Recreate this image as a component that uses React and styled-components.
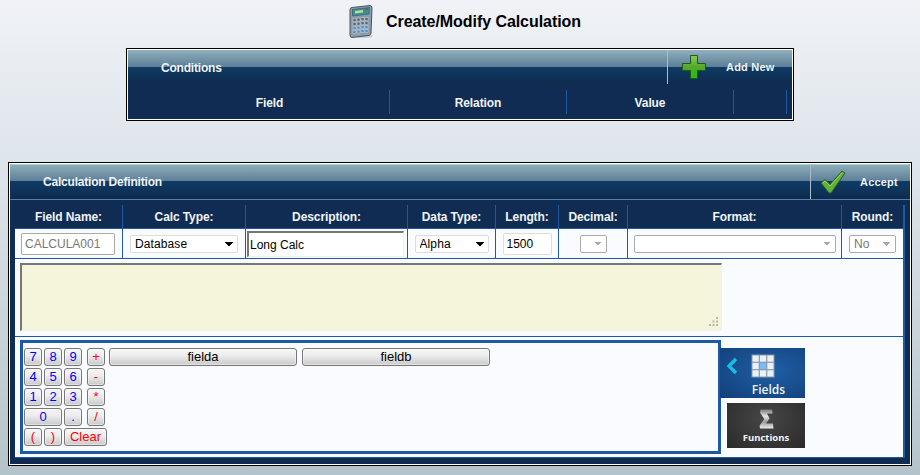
import React from "react";
import styled, { createGlobalStyle } from "styled-components";

const Global = createGlobalStyle`
  html, body { margin: 0; padding: 0; }
  body { font-family: "Liberation Sans", Arial, sans-serif; background: #c0ccd3; }
  * { box-sizing: border-box; }
`;

const Page = styled.div`
  width: 920px; height: 475px; overflow: hidden;
  background: linear-gradient(180deg, #f0f2f6 0%, #e2e8ee 25%, #d8e0e6 45%, #b4c3ca 100%);
  display: flex; flex-direction: column; align-items: center;
`;
const TitleRow = styled.div`
  height: 48px; width: 100%; display: flex; align-items: flex-start;
  padding: 5px 0 0 348px; gap: 12px;
`;
const Title = styled.h1`
  margin: 8px 0 0; font-size: 16px; line-height: 18px; font-weight: bold; color: #000; letter-spacing: -0.06px;
`;
const Panel = styled.section`
  width: ${p => p.$w}px; margin-top: ${p => p.$mt || 0}px;
  border: 1px solid #000; box-shadow: inset 0 0 0 1px #fff; padding: 1px;
  display: flex; flex-direction: column;
`;
const Header = styled.header`
  height: ${p => p.$h}px; display: flex; align-items: center; justify-content: space-between;
  background: linear-gradient(180deg, #8fb0bc 0%, #5d7f98 49%, #0f3b66 50%, #0f3257 80%, #0e2a4b 100%);
  box-shadow: inset 0 1px 0 ${p => p.$hl};
  color: #fff;
`;
const HeaderTitle = styled.span`
  font-size: 12px; font-weight: bold; padding: 1px 0 0 ${p => p.$pl}px; color: #f0f3f6; letter-spacing: -0.2px;
`;
const Action = styled.div`
  height: 100%; width: ${p => p.$w}px; border-left: 1px solid #a9bcc8;
  display: flex; align-items: center; padding-left: ${p => p.$pl}px; gap: ${p => p.$gap}px;
  font-size: 11px; font-weight: bold; color: #eef2f5; flex: none; letter-spacing: 0.2px;
`;
const CondRow = styled.div`
  height: 35px; background: #102c52; padding: 6px 0 5px 22px;
  display: grid; grid-template-columns: 240px 177px 167px 53px 1fr;
`;
const HeadCell = styled.div`
  color: #f0f3f6; font-size: 12px; font-weight: bold; text-align: center; letter-spacing: -0.1px;
  display: flex; align-items: center; justify-content: center; padding-top: 1px;
  border-right: ${p => p.$edge ? "2px solid #1d5aa6" : p.$last ? "none" : "1px solid #1d5aa6"};
`;
const Frame = styled.div`
  background: #102c52; padding: 0 5px 6px 5px; border-top: 1px solid #4a83ad;
`;
const Inner = styled.div`
  display: flex; flex-direction: column;
  border-bottom: 1px solid #1d5aa6;
`;
const cols = "108px 123px 162px 88px 63px 69px 214px 1fr";
const DefHead = styled.div`
  display: grid; grid-template-columns: ${cols}; height: 29px; padding-top: 5px;
  background: #102c52; border-bottom: 1px solid #1d5aa6;
`;
const Content = styled.div`background: #fafbfe; border-right: 2px solid #1d5aa6;`;
const DefRow = styled.div`
  display: grid; grid-template-columns: ${cols}; height: 30px;
  border-bottom: 1px solid #1d5aa6;
`;
const Cell = styled.div`
  display: flex; align-items: center; justify-content: ${p => p.$j || "center"};
  padding-left: ${p => p.$pl || 0}px; padding-top: 1px;
  border-right: ${p => p.$last ? "none" : "1px solid #1d5aa6"};
`;
const TextBox = styled.input`
  width: ${p => p.$w}px; height: 22px; font: 12px "Liberation Sans", Arial, sans-serif;
  color: ${p => p.disabled ? "#777" : "#000"}; background: #fff;
  border: 1px solid ${p => p.disabled ? "#aaa" : "#ddd"}; border-radius: 2px; padding: 0 3px; outline: none;
`;
const DescBox = styled.input`
  width: 157px; height: 26px; margin-left: -2px; font: 12px "Liberation Sans", Arial, sans-serif; color: #000;
  background: #fff; border-style: solid; border-width: 2px 1px 1px 2px;
  border-color: #777 #eee #eee #777; padding: 0 1px; outline: none;
`;
const Select = styled.select`
  appearance: none;
  width: ${p => p.$w}px; height: 18px; font: 12px "Liberation Sans", Arial, sans-serif; letter-spacing: 0.1px;
  color: ${p => p.disabled ? "#777" : "#000"};
  border: 1px solid ${p => p.disabled ? "#aaa" : "#ddd"}; border-radius: 2px; padding: 0 0 0 4px; opacity: 1;
  background-color: #fff;
  background-image:
    linear-gradient(45deg, transparent 50%, ${p => p.disabled ? "#a8a8a8" : "#000"} 50%),
    linear-gradient(-45deg, transparent 50%, ${p => p.disabled ? "#a8a8a8" : "#000"} 50%);
  background-size: 4px 4px;
  background-repeat: no-repeat;
  background-position: right 8px center, right 4px center;
`;
const AreaRow = styled.div`
  height: 78px; padding: 4px 0 0 5px; border-bottom: 1px solid #1d5aa6; position: relative;
`;
const Area = styled.textarea`
  display: block; width: 702px; height: 68px; margin: 0; background: #f5f5dc; outline: none; resize: none;
  border-style: solid; border-width: 2px 1px 1px 2px; border-color: #777 #f0f0f0 #f0f0f0 #777;
`;
const Grip = styled.svg`
  position: absolute; left: 693px; top: 57px;
`;
const Work = styled.div`
  display: flex; padding: 3px 0 3px 5px; height: 120px;
`;
const CalcBox = styled.div`
  width: 701px; height: 114px; border: 3px solid #1d5aa6; padding: 5px 0 0 1px;
  display: flex; gap: 1px;
`;
const Keypad = styled.div`display: flex; flex-direction: column; gap: 2px; width: 84px; flex: none;`;
const KeyRow = styled.div`display: flex; gap: 2px;`;
const Key = styled.button`
  width: ${p => p.$w || 18}px; height: 18px; margin-left: ${p => p.$ml || 0}px; padding: 0; flex: none;
  font: 13px "Liberation Sans", Arial, sans-serif; color: ${p => p.$red ? "#f00" : "#00f"};
  background: linear-gradient(180deg, #f6f6f6 0%, #ededed 40%, #c9c9c9 100%);
  border: 1px solid #777; border-radius: 3px; line-height: 16px;
  box-shadow: inset 0 0 0 1px rgba(255,255,255,.45);
`;
const FieldKey = styled(Key)`
  width: 188px; color: #000; height: 18px; margin-right: 3px;
`;
const Side = styled.div`
  display: flex; flex-direction: column; align-items: flex-end; width: 85px; margin-left: -1px;
  padding-top: 8px; gap: 5px; flex: none;
`;
const Tile = styled.div`
  width: ${p => p.$w}px; height: ${p => p.$h}px; display: flex; flex-direction: column; align-items: center;
  color: #f2f5f8; font-weight: ${p => p.$fw}; font-size: ${p => p.$fs}px; font-family: "Open Sans", "Liberation Sans", sans-serif;
  background: ${p => p.$bg};
`;
const FieldsInner = styled.div`
  display: flex; align-items: center; width: 100%; padding: 6px 0 0 6px; gap: 13px;
`;
const SigmaSlot = styled.div`height: 26px; padding-top: 6px; line-height: 0;`;
const TileLabel = styled.span`margin: ${p => p.$m}; line-height: 12px;`;

const Calculator = () => (
  <svg width="26" height="34" viewBox="0 0 26 34">
    <ellipse cx="15" cy="31" rx="10" ry="2" fill="#c8ced4" />
    <path d="M4 2.5 L22 .5 Q24 .5 24 3 L23 28 Q23 30 21 30.4 L4 32.5 Q2 32.5 2 30 L2 4.5 Q2 2.7 4 2.5Z" fill="#8d9cab" stroke="#4a5560" />
    <path d="M4.5 4.5 L21.5 2.5 L21 9 L4.5 11Z" fill="#3f8f92" stroke="#2f5d70" strokeWidth=".7" />
    <path d="M7 6 L15 5 L15 7.6 L7 8.6Z" fill="#bcdc9c" />
    <rect x="17" y="3.4" width="3" height="1.2" fill="#b33" />
    {[0,1,2,3].map(r => [0,1,2,3].map(c => (
      <rect key={r+"-"+c} x={5 + c*4} y={13.4 + r*4 - c*0.3} width="3" height="3" fill={r > 1 ? "#4d8fc9" : "#5a6672"} stroke="#dfe5ea" strokeWidth=".4" />
    )))}
  </svg>
);
const Plus = () => (
  <svg width="24" height="24" viewBox="0 0 24 24">
    <defs>
      <linearGradient id="pg" x1="0" y1="0" x2="0" y2="1">
        <stop offset="0" stopColor="#8ec85a" /><stop offset=".5" stopColor="#55a82a" /><stop offset="1" stopColor="#1fc20e" />
      </linearGradient>
    </defs>
    <path d="M8.5 .5 H15.5 V8.5 H23.5 V15.5 H15.5 V23.5 H8.5 V15.5 H.5 V8.5 H8.5Z" fill="url(#pg)" stroke="#1f5a14" />
  </svg>
);
const Check = () => (
  <svg width="26" height="24" viewBox="0 0 26 24">
    <path d="M1 13 L5 9.5 L10 14.5 L22 1 L25 3 L11 23 L9 23Z" fill="#5fb337" stroke="#2f5c2a" strokeWidth="1" strokeLinejoin="round" />
    <path d="M3 13 L5 11 L10 16 L22 3" fill="none" stroke="#8fd45c" strokeWidth="1" />
  </svg>
);
const GridIcon = () => (
  <svg width="24" height="24" viewBox="0 0 24 24">
    <rect x="0.5" y="0.5" width="23" height="23" fill="#8d99a5" />
    {[0,1,2].map(r => [0,1,2].map(c => (
      <rect key={r+"-"+c} x={1.5 + c*7.4} y={1.5 + r*7.4} width="6.2" height="6.2" fill={r===1 && c===1 ? "#79bdf5" : "#e8f0f8"} />
    )))}
  </svg>
);
const Chevron = () => (
  <svg width="12" height="18" viewBox="0 0 12 18">
    <path d="M10 2 L3 9 L10 16" fill="none" stroke="#17bde8" strokeWidth="3.4" />
  </svg>
);
const Sigma = () => (
  <svg width="15" height="20" viewBox="0 0 15 20">
    <defs>
      <linearGradient id="sg" x1="0" y1="0" x2="0" y2="1">
        <stop offset="0" stopColor="#7a7a7a" /><stop offset=".35" stopColor="#e4e4e4" /><stop offset=".65" stopColor="#9a9a9a" /><stop offset="1" stopColor="#ececec" />
      </linearGradient>
    </defs>
    <path d="M1.5 .5 H13 L13.6 4.5 H8 L10.6 9.5 L7 14.6 H14 L14.5 19.5 H1 L.6 16.6 L5.2 10 L1 3.5Z" fill="url(#sg)" />
  </svg>
);
const dots = [[14,0],[7,7],[14,7],[0,14],[7,14],[14,14]];
const GripDots = () => (
  <Grip width="16" height="12" viewBox="0 0 32 24">
    {dots.map(([x, y]) => <rect key={x+"-"+y} x={x + 2} y={y + 2} width="4" height="4" fill="#b9b9a8" />)}
  </Grip>
);

const nums = [["7","8","9","+"],["4","5","6","-"],["1","2","3","*"]];

export default function App() {
  return (
    <Page>
      <Global />
      <TitleRow>
        <Calculator />
        <Title>Create/Modify Calculation</Title>
      </TitleRow>
      <Panel $w={668}>
        <Header $h={34} $hl="#8fb0bc">
          <HeaderTitle $pl={33}>Conditions</HeaderTitle>
          <Action $w={125} $pl={14} $gap={20}><Plus />Add New</Action>
        </Header>
        <CondRow>
          <HeadCell>Field</HeadCell>
          <HeadCell>Relation</HeadCell>
          <HeadCell>Value</HeadCell>
          <HeadCell />
          <HeadCell $last />
        </CondRow>
      </Panel>
      <Panel $w={904} $mt={41}>
        <Header $h={35} $hl="#a8d0d0">
          <HeaderTitle $pl={33}>Calculation Definition</HeaderTitle>
          <Action $w={100} $pl={9} $gap={14}><Check />Accept</Action>
        </Header>
        <Frame>
          <Inner>
            <DefHead>
              <HeadCell>Field Name:</HeadCell>
              <HeadCell>Calc Type:</HeadCell>
              <HeadCell>Description:</HeadCell>
              <HeadCell>Data Type:</HeadCell>
              <HeadCell>Length:</HeadCell>
              <HeadCell>Decimal:</HeadCell>
              <HeadCell>Format:</HeadCell>
              <HeadCell $edge>Round:</HeadCell>
            </DefHead>
            <Content>
              <DefRow>
                <Cell $j="flex-start" $pl={6}><TextBox disabled $w={94} defaultValue="CALCULA001" /></Cell>
                <Cell><Select $w={108} defaultValue="Database"><option>Database</option></Select></Cell>
                <Cell><DescBox defaultValue="Long Calc" /></Cell>
                <Cell><Select $w={74} defaultValue="Alpha"><option>Alpha</option></Select></Cell>
                <Cell><TextBox $w={49} defaultValue="1500" /></Cell>
                <Cell><Select disabled $w={27}><option></option></Select></Cell>
                <Cell><Select disabled $w={202}><option></option></Select></Cell>
                <Cell $last $j="flex-start" $pl={7}><Select disabled $w={47} defaultValue="No"><option>No</option></Select></Cell>
              </DefRow>
              <AreaRow><Area /><GripDots /></AreaRow>
              <Work>
                <CalcBox>
                  <Keypad>
                    {nums.map((row, i) => (
                      <KeyRow key={i}>
                        {row.slice(0, 3).map(k => <Key key={k}>{k}</Key>)}
                        <Key $red $ml={3}>{row[3]}</Key>
                      </KeyRow>
                    ))}
                    <KeyRow>
                      <Key $w={38}>0</Key>
                      <Key>.</Key>
                      <Key $red $ml={3}>/</Key>
                    </KeyRow>
                    <KeyRow>
                      <Key $red>(</Key>
                      <Key $red>)</Key>
                      <Key $red $w={43}>Clear</Key>
                    </KeyRow>
                  </Keypad>
                  <KeyRow>
                    <FieldKey>fielda</FieldKey>
                    <FieldKey>fieldb</FieldKey>
                  </KeyRow>
                </CalcBox>
                <Side>
                  <Tile $w={85} $h={50} $fs={12} $fw={600} $bg="radial-gradient(ellipse at 60% 45%, #1f5fa6 0%, #123f78 100%)">
                    <FieldsInner><Chevron /><GridIcon /></FieldsInner>
                    <TileLabel $m="6px 0 0 12px">Fields</TileLabel>
                  </Tile>
                  <Tile $w={78} $h={45} $fs={9.5} $fw={700} $bg="radial-gradient(ellipse at 50% 35%, #474747 0%, #2a2a2a 100%)">
                    <SigmaSlot><Sigma /></SigmaSlot>
                    <TileLabel $m="3px 0 0 0">Functions</TileLabel>
                  </Tile>
                </Side>
              </Work>
            </Content>
          </Inner>
        </Frame>
      </Panel>
    </Page>
  );
}
